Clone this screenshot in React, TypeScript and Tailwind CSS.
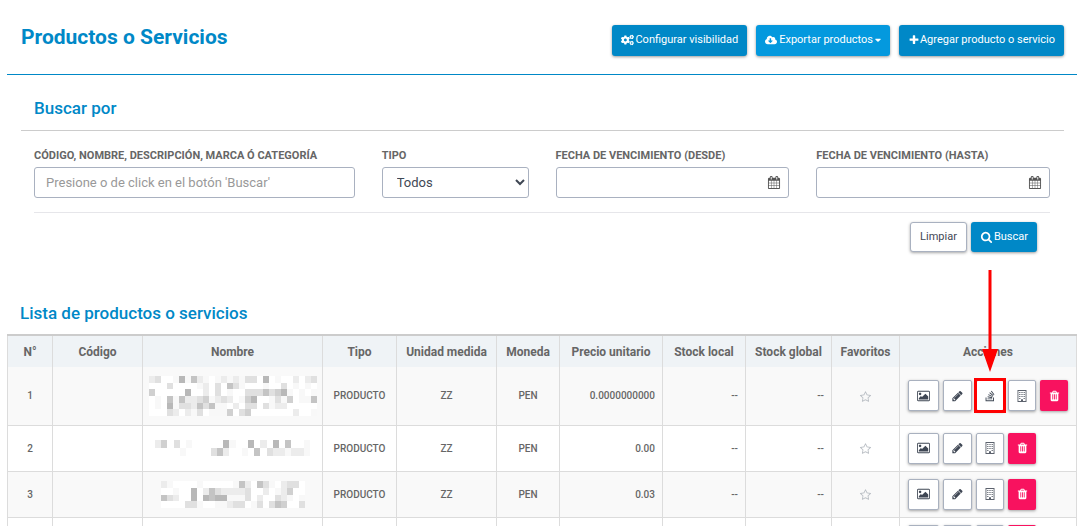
import React from "react";
import { FaCogs, FaCloudDownloadAlt, FaStackOverflow, FaCaretDown } from "react-icons/fa";

const PATHS = {
  picture:
    "M576 576q0 80-56 136t-136 56-136-56-56-136 56-136 136-56 136 56 56 136zm1024 384v448h-1408v-192l320-320 160 160 512-512zm96-704h-1600q-13 0-22.5 9.5t-9.5 22.5v1216q0 13 9.5 22.5t22.5 9.5h1600q13 0 22.5-9.5t9.5-22.5v-1216q0-13-9.5-22.5t-22.5-9.5zm160 32v1216q0 66-47 113t-113 47h-1600q-66 0-113-47t-47-113v-1216q0-66 47-113t113-47h1600q66 0 113 47t47 113z",
  pencil:
    "M491 1536l91-91-235-235-91 91v107h128v128h107zm523-928q0-22-22-22-10 0-17 7l-542 542q-7 7-7 17 0 22 22 22 10 0 17-7l542-542q7-7 7-17zm-54-192l416 416-832 832h-416v-416zm683 96q0 53-37 90l-166 166-416-416 166-165q36-38 90-38 53 0 91 38l235 234q37 39 37 91z",
  calendar:
    "M192 1664h288v-288h-288v288zm352 0h320v-288h-320v288zm-352-352h288v-320h-288v320zm352 0h320v-320h-320v320zm-352-384h288v-288h-288v288zm736 736h320v-288h-320v288zm-384-736h320v-288h-320v288zm768 736h288v-288h-288v288zm-384-352h320v-320h-320v320zm-352-864v-288q0-13-9.5-22.5t-22.5-9.5h-64q-13 0-22.5 9.5t-9.5 22.5v288q0 13 9.5 22.5t22.5 9.5h64q13 0 22.5-9.5t9.5-22.5zm736 864h288v-320h-288v320zm-384-384h320v-288h-320v288zm384 0h288v-288h-288v288zm32-480v-288q0-13-9.5-22.5t-22.5-9.5h-64q-13 0-22.5 9.5t-9.5 22.5v288q0 13 9.5 22.5t22.5 9.5h64q13 0 22.5-9.5t9.5-22.5zm384-64v1280q0 52-38 90t-90 38h-1408q-52 0-90-38t-38-90v-1280q0-52 38-90t90-38h128v-96q0-66 47-113t113-47h64q66 0 113 47t47 113v96h384v-96q0-66 47-113t113-47h64q66 0 113 47t47 113v96h128q52 0 90 38t38 90z",
  trash:
    "M704 1376v-704q0-14-9-23t-23-9h-64q-14 0-23 9t-9 23v704q0 14 9 23t23 9h64q14 0 23-9t9-23zm256 0v-704q0-14-9-23t-23-9h-64q-14 0-23 9t-9 23v704q0 14 9 23t23 9h64q14 0 23-9t9-23zm256 0v-704q0-14-9-23t-23-9h-64q-14 0-23 9t-9 23v704q0 14 9 23t23 9h64q14 0 23-9t9-23zm-544-992h448l-48-117q-7-9-17-11h-317q-10 2-17 11zm928 32v64q0 14-9 23t-23 9h-96v948q0 83-47 143.5t-113 60.5h-832q-66 0-113-58.5t-47-141.5v-952h-96q-14 0-23-9t-9-23v-64q0-14 9-23t23-9h309l70-167q15-37 54-63t79-26h320q40 0 79 26t54 63l70 167h309q14 0 23 9t9 23z",
  star: "M1201 1004l306-297-422-62-189-382-189 382-422 62 306 297-73 421 378-199 377 199zm527-357q0 22-26 48l-363 354 86 500q1 7 1 20 0 50-41 50-19 0-40-12l-449-236-449 236q-22 12-40 12-21 0-31.5-14.5t-10.5-35.5q0-6 2-20l86-500-364-354q-25-27-25-48 0-37 56-46l502-73 225-455q19-41 49-41t49 41l225 455 502 73q56 9 56 46z",
  search:
    "M1216 832q0-185-131.5-316.5t-316.5-131.5-316.5 131.5-131.5 316.5 131.5 316.5 316.5 131.5 316.5-131.5 131.5-316.5zm512 832q0 52-38 90t-90 38q-54 0-90-38l-343-342q-179 124-399 124-143 0-273.5-55.5t-225-150-150-225-55.5-273.5 55.5-273.5 150-225 225-150 273.5-55.5 273.5 55.5 225 150 150 225 55.5 273.5q0 220-124 399l343 343q37 37 37 90z",
  plus: "M1600 736v192q0 40-28 68t-68 28h-416v416q0 40-28 68t-68 28h-192q-40 0-68-28t-28-68v-416h-416q-40 0-68-28t-28-68v-192q0-40 28-68t68-28h416v-416q0-40 28-68t68-28h192q40 0 68 28t28 68v416h416q40 0 68 28t28 68z",
};

function Icon({ name, className }: { name: keyof typeof PATHS; className: string }) {
  return (
    <svg viewBox="-64 0 1920 1792" fill="currentColor" aria-hidden="true" className={className}>
      <path d={PATHS[name]} />
    </svg>
  );
}

function BuildingIcon() {
  return (
    <svg viewBox="0 0 10 12" fill="currentColor" aria-hidden="true" className="h-3 w-[10px]">
      <path fillRule="evenodd" opacity="0.85" d="M0.5 0h9v12h-9zM1.4 0.9v10.2H4V9.3h2v1.8h2.6V0.9z" />
      {[2, 4, 6].map((y) => (
        <path key={y} opacity="0.85" d={`M2.2 ${y}h1.2v1H2.2zM4.4 ${y}h1.2v1H4.4zM6.6 ${y}h1.2v1H6.6z`} />
      ))}
      <path opacity="0.85" d="M2.2 8h1.2v1H2.2zM6.6 8h1.2v1H6.6z" />
    </svg>
  );
}

const SHADES = ["#ffffff", "#f8f8f8", "#ececec", "#e0e0e0", "#d0d0d0", "#c4c4c4", "#b8b8b8"];

type MosaicData = { rows: string[]; className: string };

function Mosaic({ rows, className }: MosaicData) {
  return (
    <svg
      viewBox={`0 0 ${rows[0].length} ${rows.length}`}
      preserveAspectRatio="none"
      shapeRendering="crispEdges"
      role="img"
      aria-label="Nombre oculto"
      className={className}
    >
      {rows.map((row, y) =>
        row.split("").map((c, x) => (
          <rect key={`${x}-${y}`} x={x} y={y} width="1" height="1" fill={SHADES[Number(c)]} />
        )),
      )}
    </svg>
  );
}

type Product = {
  index?: number;
  type?: string;
  unit?: string;
  currency?: string;
  price?: string;
  stock?: string;
  hasStockAction?: boolean;
  height: string;
  name?: MosaicData;
};

const common = { type: "PRODUCTO", unit: "ZZ", currency: "PEN", stock: "--" };

const products: Product[] = [
  {
    ...common,
    index: 1,
    price: "0.0000000000",
    hasStockAction: true,
    height: "h-[58px]",
    name: {
      className: "mx-auto block h-10 w-[168px]",
      rows: [
        "2300161521012121330601002023",
        "0003000012030531000100301010",
        "4000006002030100333534610101",
        "0105152234123201460013140115",
        "0106133253511020330312200000",
        "0003202130111403400000002001",
      ],
    },
  },
  {
    ...common,
    index: 2,
    price: "0.00",
    height: "h-[46px]",
    name: {
      className: "mx-auto block h-4 w-[155px]",
      rows: ["2403010000061006020605001", "0000100003520010503221221"],
    },
  },
  {
    ...common,
    index: 3,
    price: "0.03",
    height: "h-[46px]",
    name: {
      className: "mx-auto block h-[27px] w-36",
      rows: [
        "210000100000152053102330",
        "001006025322223002012400",
        "532006065661113020032101",
        "000033100112330130354003",
      ],
    },
  },
  { height: "h-[46px]" },
];

const columns = [
  { label: "N°", width: "w-[45px]" },
  { label: "Código", width: "w-[90px]" },
  { label: "Nombre", width: "" },
  { label: "Tipo", width: "w-[74px]" },
  { label: "Unidad medida", width: "w-[100px]" },
  { label: "Moneda", width: "w-[63px]" },
  { label: "Precio unitario", width: "w-[103px]" },
  { label: "Stock local", width: "w-[83px]" },
  { label: "Stock global", width: "w-[86px]" },
  { label: "Favoritos", width: "w-[68px]" },
  { label: "Acciones", width: "w-[177px]" },
];

const primary =
  "flex items-center rounded-[3px] bg-[#0088c7] px-[9px] text-[11px] text-white shadow-[0_1px_3px_rgba(0,0,0,0.4)]";
const action =
  "flex h-[31px] w-7 items-center justify-center rounded-xs border border-[#a9b1bf] bg-white text-[#3f4754] shadow-[0_1px_3px_rgba(0,0,0,0.35)]";
const label = "block text-[11px] leading-4 font-bold whitespace-nowrap text-[#666]";
const field = "h-[31px] w-full rounded-[3px] border border-[#a9b1c0] bg-white text-[13px] text-[#3f4754]";
const cell = "border border-t-0 border-[#dcdcdc]";

function DateField({ id, text }: { id: string; text: string }) {
  return (
    <div className="col-span-3">
      <label htmlFor={id} className={label}>
        {text}
      </label>
      <div className="relative mt-[3px]">
        <input id={id} type="text" className={`${field} px-3`} />
        <Icon name="calendar" className="pointer-events-none absolute top-[9px] right-2 h-[13px] w-[14px] text-[#555]" />
      </div>
    </div>
  );
}

function Pointer() {
  return (
    <>
      <span className="pointer-events-none absolute -inset-x-[2px] -inset-y-[2px] border-3 border-[#fe0000]" />
      <svg
        viewBox="0 0 18 102"
        fill="#fe0000"
        aria-hidden="true"
        className="pointer-events-none absolute bottom-full left-1/2 mb-2 h-[102px] w-[18px] -translate-x-1/2"
      >
        <path d="M7.5 0h3v79H17L9 102 1 79h6.5z" />
      </svg>
    </>
  );
}

export default function App() {
  return (
    <main className="h-screen overflow-hidden bg-white pr-2 pl-[7px] font-[Roboto,sans-serif] text-[#666]">
      <header className="flex h-[75px] items-center justify-between border-b border-[#0088c7] pr-[13px] pl-[14px]">
        <h1 className="text-[21px] leading-6 font-bold text-[#0088c7]">Productos o Servicios</h1>
        <div className="flex gap-[9px] pt-[6px]">
          <button type="button" className={`${primary} h-[31px] gap-px`}>
            <FaCogs className="h-3 w-[13px]" />
            Configurar visibilidad
          </button>
          <button
            type="button"
            className="flex h-[31px] items-center gap-[2px] rounded-[3px] bg-[#0499de] px-[9px] text-[11px] text-white shadow-[0_1px_3px_rgba(0,0,0,0.4)]"
          >
            <FaCloudDownloadAlt className="h-3 w-[12px]" />
            Exportar productos
            <FaCaretDown className="h-[10px] w-[6px]" />
          </button>
          <button type="button" className={`${primary} h-[31px]`}>
            <Icon name="plus" className="h-3 w-[12px]" />
            Agregar producto o servicio
          </button>
        </div>
      </header>

      <section className="pr-[13px] pl-[14px]">
        <h2 className="border-b border-[#ccc] px-[13px] pt-[21px] pb-[10px] text-[17px] leading-6 font-medium text-[#0088c7]">
          Buscar por
        </h2>
        <form className="pt-[17px] pr-[14px] pl-[13px]" onSubmit={(e) => e.preventDefault()}>
          <div className="grid grid-cols-12 gap-x-[27px] border-b border-[#e6e6ea] pb-[14px]">
            <div className="col-span-4">
              <label htmlFor="q" className={label}>
                CÓDIGO, NOMBRE, DESCRIPCIÓN, MARCA Ó CATEGORÍA
              </label>
              <input
                id="q"
                type="text"
                placeholder="Presione o de click en el botón 'Buscar'"
                className={`${field} mt-[3px] px-[11px] placeholder:text-[#999]`}
              />
            </div>
            <div className="col-span-2">
              <label htmlFor="tipo" className={label}>
                TIPO
              </label>
              <select id="tipo" className={`${field} mt-[3px] pl-[10px]`}>
                <option>Todos</option>
              </select>
            </div>
            <DateField id="desde" text="FECHA DE VENCIMIENTO (DESDE)" />
            <DateField id="hasta" text="FECHA DE VENCIMIENTO (HASTA)" />
          </div>
          <div className="flex justify-end gap-1 pt-[9px] pr-[13px]">
            <button
              type="reset"
              className="h-[30px] rounded-[3px] border border-[#a9b1c0] bg-white px-[9px] text-[11px] text-[#3f4754] shadow-[0_1px_3px_rgba(0,0,0,0.35)]"
            >
              Limpiar
            </button>
            <button type="submit" className={`${primary} h-[30px] gap-px`}>
              <Icon name="search" className="h-3 w-[13px]" />
              Buscar
            </button>
          </div>
        </form>
      </section>

      <section>
        <h2 className="px-[13px] pt-[49px] pb-[9px] text-[17px] leading-6 font-medium text-[#0088c7]">
          Lista de productos o servicios
        </h2>
        <table className="w-full table-fixed border-collapse text-[10px] font-medium">
          <thead>
            <tr className="h-8 border-t-2 border-[#ccc] bg-[#eff3f6]">
              {columns.map((c) => (
                <th
                  key={c.label}
                  scope="col"
                  className={`${c.width} border-x border-[#dcdcdc] p-0 text-center text-[12px] font-bold whitespace-nowrap`}
                >
                  {c.label}
                </th>
              ))}
            </tr>
          </thead>
          <tbody>
            {products.map((p, i) => (
              <tr key={i} className={`${p.height} text-center odd:bg-[#f9f9f9]`}>
                <td className={cell}>{p.index}</td>
                <td className={cell} />
                <td className={`${cell} p-0`}>{p.name && <Mosaic {...p.name} />}</td>
                <td className={cell}>{p.type}</td>
                <td className={cell}>{p.unit}</td>
                <td className={cell}>{p.currency}</td>
                <td className={`${cell} pr-[7px] text-right`}>{p.price}</td>
                <td className={`${cell} pr-[7px] text-right`}>{p.stock}</td>
                <td className={`${cell} pr-[7px] text-right`}>{p.stock}</td>
                <td className={cell}>
                  <button type="button" aria-label="Marcar como favorito" className="align-middle text-[#b9bec4]">
                    <Icon name="star" className="h-3 w-[13px]" />
                  </button>
                </td>
                <td className={`${cell} p-0 pl-2`}>
                  <div className="flex gap-1">
                    <button type="button" aria-label="Imagen" className={`${action} min-w-[31px]`}>
                      <Icon name="picture" className="h-3 w-[13px]" />
                    </button>
                    <button type="button" aria-label="Editar" className={`${action} min-w-[29px]`}>
                      <Icon name="pencil" className="h-3 w-[13px]" />
                    </button>
                    {p.hasStockAction && (
                      <span className="relative">
                        <button type="button" aria-label="Stock" className={action}>
                          <FaStackOverflow className="h-3 w-[12px]" />
                        </button>
                        <Pointer />
                      </span>
                    )}
                    <button type="button" aria-label="Sucursales" className={action}>
                      <BuildingIcon />
                    </button>
                    <button
                      type="button"
                      aria-label="Eliminar"
                      className="flex h-[31px] w-7 items-center justify-center rounded-xs bg-[#f8125f] text-white shadow-[0_1px_3px_rgba(0,0,0,0.35)]"
                    >
                      <Icon name="trash" className="h-3 w-[13px]" />
                    </button>
                  </div>
                </td>
              </tr>
            ))}
          </tbody>
        </table>
      </section>
    </main>
  );
}
